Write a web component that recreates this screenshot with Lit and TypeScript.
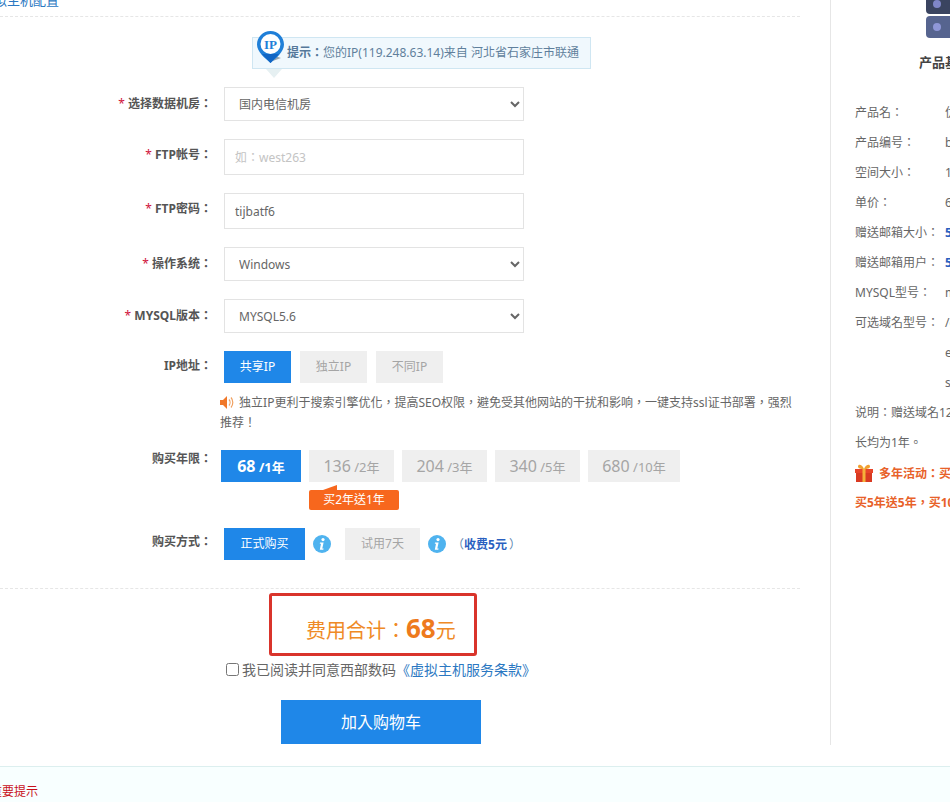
import { LitElement, html, css } from "lit";
import { customElement } from "lit/decorators.js";

const years = [
  { p: "68", y: "/1年", w: 80, on: true },
  { p: "136", y: "/2年", w: 85 },
  { p: "204", y: "/3年", w: 85 },
  { p: "340", y: "/5年", w: 85 },
  { p: "680", y: "/10年", w: 92 },
];

const specs: [string, string, boolean?][] = [
  ["产品名：", "优选虚拟主机"],
  ["产品编号：", "b001"],
  ["空间大小：", "1000M"],
  ["单价：", "680元/年"],
  ["赠送邮箱大小：", "5G", true],
  ["赠送邮箱用户：", "5个", true],
  ["MYSQL型号：", "mysql5.6"],
  ["可选域名型号：", "/cn/com/net"],
  ["", "en/org/cc"],
  ["", "shop/top"],
];

const infoIcon = html`<svg class="info" viewBox="0 0 18 18" width="18" height="18">
  <circle cx="9" cy="9" r="9" fill="#4fb3ef"></circle>
  <circle cx="10" cy="4.6" r="1.6" fill="#fff"></circle>
  <path d="M7 7.6h3.6l-1.3 6h1.3l-.3 1.2H6.8l1.2-6H6.8z" fill="#fff"></path>
</svg>`;

@customElement("app-root")
export class AppRoot extends LitElement {
  static styles = css`
    :host {
      display: block;
      width: 950px;
      height: 802px;
      overflow: hidden;
      background: #fff;
      font-family: "Noto Sans", "Noto Sans CJK TC", sans-serif;
      font-size: 12px;
      color: #666;
    }
    * { box-sizing: border-box; }
    .page { display: flex; height: 745px; }
    .left { width: 800px; flex: none; }
    .title {
      margin-top: -10px;
      height: 27px;
      line-height: 20px;
      border-bottom: 1px dashed #e6e6e6;
      color: #2b78c2;
      font-size: 13px;
      text-indent: -19px;
      overflow: hidden;
    }
    .hint-wrap { display: flex; margin: 20px 0 18px 252px; }
    .hint {
      position: relative;
      width: 339px;
      height: 32px;
      padding-left: 34px;
      line-height: 30px;
      background: #f0f8fd;
      border: 1px solid #cfe6f2;
      color: #5f7f9c;
      white-space: nowrap;
    }
    .hint b { color: #55789a; }
    .pin { position: absolute; left: 4px; top: -7px; }
    .tail { position: absolute; left: 13px; top: 31px; }
    .form { display: flex; flex-direction: column; gap: 18px; }
    .row { display: flex; align-items: flex-start; }
    .label {
      width: 212px;
      margin-right: 12px;
      flex: none;
      text-align: right;
      font-weight: 700;
      color: #555;
      white-space: nowrap;
    }
    .label i { color: #d0103a; font-style: normal; font-weight: 400; }
    .lh-select { height: 34px; line-height: 34px; }
    .lh-input { height: 32px; line-height: 32px; }
    .lh-ip { line-height: 30px; }
    .lh-year { line-height: 18px; }
    .lh-buy { line-height: 28px; }
    .tight { margin-right: 9px; }
    .ctl {
      width: 300px;
      border: 1px solid #e3e3e3;
      background: #fff;
      color: #666;
      font: inherit;
      outline: none;
    }
    select.ctl { height: 34px; padding: 0 0 0 10px; }
    input.ctl { height: 36px; padding-left: 10px; }
    input.ctl::placeholder { color: #c4c4c4; }
    .btns { display: flex; gap: 9px; align-items: center; }
    .btn {
      height: 32px;
      line-height: 32px;
      width: 67px;
      text-align: center;
      background: #efefef;
      color: #a5a5a5;
      white-space: nowrap;
    }
    .btn.on { background: #1f87e8; color: #fff; }
    .note {
      width: 575px;
      margin: -8px 0 -1px 220px;
      line-height: 20px;
      color: #666;
    }
    .note svg { vertical-align: -2px; margin-right: 2px; }
    .year-block { display: flex; flex-direction: column; }
    .years { display: flex; gap: 8px; }
    .year {
      height: 32px;
      line-height: 32px;
      text-align: center;
      background: #efefef;
      color: #a5a5a5;
      font-size: 13px;
      white-space: nowrap;
    }
    .year span { font-size: 16px; }
    .year.on { background: #1f87e8; color: #fff; font-weight: 700; }
    .badge {
      position: relative;
      width: 90px;
      height: 20px;
      margin: 8px 0 0 88px;
      line-height: 20px;
      text-align: center;
      color: #fff;
      background: #f7671d;
      border-radius: 2px;
    }
    .badge::before {
      content: "";
      position: absolute;
      left: 14px;
      top: -5px;
      border-left: 14px solid transparent;
      border-bottom: 5px solid #f7671d;
    }
    .buy { display: flex; align-items: center; }
    .buy .btn { width: 81px; }
    .buy .btn.trial { width: 75px; margin-left: 14px; }
    .info { margin-left: 8px; flex: none; }
    .fee { margin-left: 6px; color: #5c86b0; white-space: nowrap; }
    .fee b { color: #2a5fc0; margin-right: 2px; }
    .divider { border-top: 1px dashed #e6e6e6; margin-top: 28px; }
    .total {
      width: 208px;
      height: 63px;
      margin: 4px 0 0 269px;
      padding: 17px 0 0 34px;
      border: 3px solid #d9342b;
      border-radius: 3px;
      color: #ef8a26;
      font-size: 20px;
      line-height: 36px;
      white-space: nowrap;
    }
    .total b { font-size: 26px; color: #ee7a1d; line-height: 30px; }
    .agree {
      display: flex;
      align-items: center;
      height: 20px;
      margin: 3px 0 0 226px;
      font-size: 14px;
      color: #666;
      white-space: nowrap;
    }
    .agree input { width: 13px; height: 13px; margin: 0 3px 0 0; }
    .agree a { color: #2b78c2; }
    .cart {
      width: 200px;
      height: 44px;
      margin: 21px 0 0 281px;
      line-height: 44px;
      text-align: center;
      color: #fff;
      background: #1f87e8;
      font-size: 16px;
    }
    .side {
      width: 256px;
      margin-left: 30px;
      flex: none;
      padding: 0 0 0 24px;
      border-left: 1px solid #e6e6e6;
    }
    .stack { display: block; margin: 0 0 0 71px; }
    .side h3 {
      margin: 14px 0 26px;
      padding-left: 64px;
      font-size: 13px;
      line-height: 20px;
      color: #444;
      font-weight: 700;
    }
    .spec { display: flex; height: 30px; line-height: 30px; white-space: nowrap; }
    .spec .k { width: 90px; flex: none; }
    .spec .blue { color: #2a5fc0; font-weight: 700; }
    .desc { line-height: 30px; white-space: nowrap; }
    .promo {
      display: flex;
      align-items: center;
      gap: 6px;
      height: 30px;
      color: #e8622a;
      font-weight: 700;
      white-space: nowrap;
    }
    .promo2 { height: 30px; line-height: 30px; color: #e8622a; font-weight: 700; white-space: nowrap; }
    .footer {
      margin-top: 21px;
      height: 36px;
      border-top: 1px solid #dcefef;
      background: #f8ffff;
      color: #c8101a;
      padding-top: 15px;
      line-height: 20px;
      text-indent: -10px;
      overflow: hidden;
    }
  `;

  render() {
    return html`
      <div class="page">
        <div class="left">
          <div class="title">虚拟主机配置</div>
          <div class="hint-wrap">
            <div class="hint">
              <svg class="tail" width="16" height="9" viewBox="0 0 16 9"><path d="M0 0h16L8 9z" fill="#e6f0f2"></path></svg>
              <svg class="pin" width="28" height="34" viewBox="0 0 28 34">
                <path d="M13 31 L24 27 L18 25z" fill="#9aa6ad"></path>
                <path d="M13.5 0C6 0 0 6 0 13.5 0 21 8 27 13.5 32 19 27 27 21 27 13.5 27 6 21 0 13.5 0z" fill="#1f7fd8"></path>
                <path d="M5 23 H22 L13.5 32z" fill="#1266c4"></path>
                <circle cx="13.5" cy="13" r="10" fill="#fff"></circle>
                <text x="13.5" y="17.5" text-anchor="middle" font-family="Liberation Serif" font-weight="700" font-size="13" fill="#1f7fd8">IP</text>
              </svg>
              <b>提示：</b>您的IP(119.248.63.14)来自 河北省石家庄市联通
            </div>
          </div>
          <div class="form">
            <div class="row">
              <div class="label lh-select"><i>*</i> 选择数据机房：</div>
              <select class="ctl"><option>国内电信机房</option></select>
            </div>
            <div class="row">
              <div class="label lh-input"><i>*</i> FTP帐号：</div>
              <input class="ctl" placeholder="如：west263" />
            </div>
            <div class="row">
              <div class="label lh-input"><i>*</i> FTP密码：</div>
              <input class="ctl" value="tijbatf6" />
            </div>
            <div class="row">
              <div class="label lh-select"><i>*</i> 操作系统：</div>
              <select class="ctl"><option>Windows</option></select>
            </div>
            <div class="row">
              <div class="label lh-select"><i>*</i> MYSQL版本：</div>
              <select class="ctl"><option>MYSQL5.6</option></select>
            </div>
            <div class="row">
              <div class="label lh-ip">IP地址：</div>
              <div class="btns">
                <div class="btn on">共享IP</div>
                <div class="btn">独立IP</div>
                <div class="btn">不同IP</div>
              </div>
            </div>
            <div class="note">
              <svg width="14" height="13" viewBox="0 0 14 13">
                <path d="M0 4h3l4-4v13L3 9H0z" fill="#f0782a"></path>
                <path d="M9 3.5c1.4 1.6 1.4 4.4 0 6M11 1.5c2.4 2.8 2.4 7.2 0 10" stroke="#f0a060" fill="none" stroke-width="1.2"></path>
              </svg>
              独立IP更利于搜索引擎优化，提高SEO权限，避免受其他网站的干扰和影响，一键支持ssl证书部署，强烈推荐！
            </div>
            <div class="row">
              <div class="label tight lh-year">购买年限：</div>
              <div class="year-block">
                <div class="years">
                  ${years.map(
                    (y) => html`<div class="year ${y.on ? "on" : ""}" style="width:${y.w}px"><span>${y.p}</span> ${y.y}</div>`
                  )}
                </div>
                <div class="badge">买2年送1年</div>
              </div>
            </div>
            <div class="row">
              <div class="label lh-buy">购买方式：</div>
              <div class="buy">
                <div class="btn on">正式购买</div>
                ${infoIcon}
                <div class="btn trial">试用7天</div>
                ${infoIcon}
                <span class="fee">（<b>收费5元</b>）</span>
              </div>
            </div>
          </div>
          <div class="divider"></div>
          <div class="total">费用合计：<b>68</b>元</div>
          <label class="agree"><input type="checkbox" />我已阅读并同意西部数码<a>《虚拟主机服务条款》</a></label>
          <div class="cart">加入购物车</div>
        </div>
        <div class="side">
          <svg class="stack" width="40" height="38" viewBox="0 0 40 38">
            <rect x="0" y="-8" width="40" height="22" rx="4" fill="#3a4460"></rect>
            <circle cx="11" cy="4" r="4" fill="#7f86c8"></circle>
            <rect x="0" y="16" width="40" height="22" rx="4" fill="#56648f"></rect>
            <circle cx="11" cy="27" r="4" fill="#8f97d8"></circle>
          </svg>
          <h3>产品基本信息</h3>
          ${specs.map(
            ([k, v, blue]) => html`<div class="spec"><div class="k">${k}</div><div class="${blue ? "blue" : ""}">${v}</div></div>`
          )}
          <div class="desc">说明：赠送域名12个月，赠送时<br />长均为1年。</div>
          <div class="promo">
            <svg width="18" height="18" viewBox="0 0 18 18">
              <path d="M9 5C7 0 3 0 3 2.500 3 4.500 6 5 9 5c3 0 6-.5 6-2.500C15 0 11 0 9 5z" fill="#f0a030"></path>
              <rect x="0" y="5" width="18" height="4" fill="#e8452a"></rect>
              <rect x="1" y="9" width="16" height="9" fill="#d93a22"></rect>
              <rect x="7.500" y="5" width="3" height="13" fill="#f5b13a"></rect>
            </svg>
            多年活动：买2年送1年，买3年送2年
          </div>
          <div class="promo2">买5年送5年，买10年送10年</div>
        </div>
      </div>
      <div class="footer">重要提示</div>
    `;
  }
}
